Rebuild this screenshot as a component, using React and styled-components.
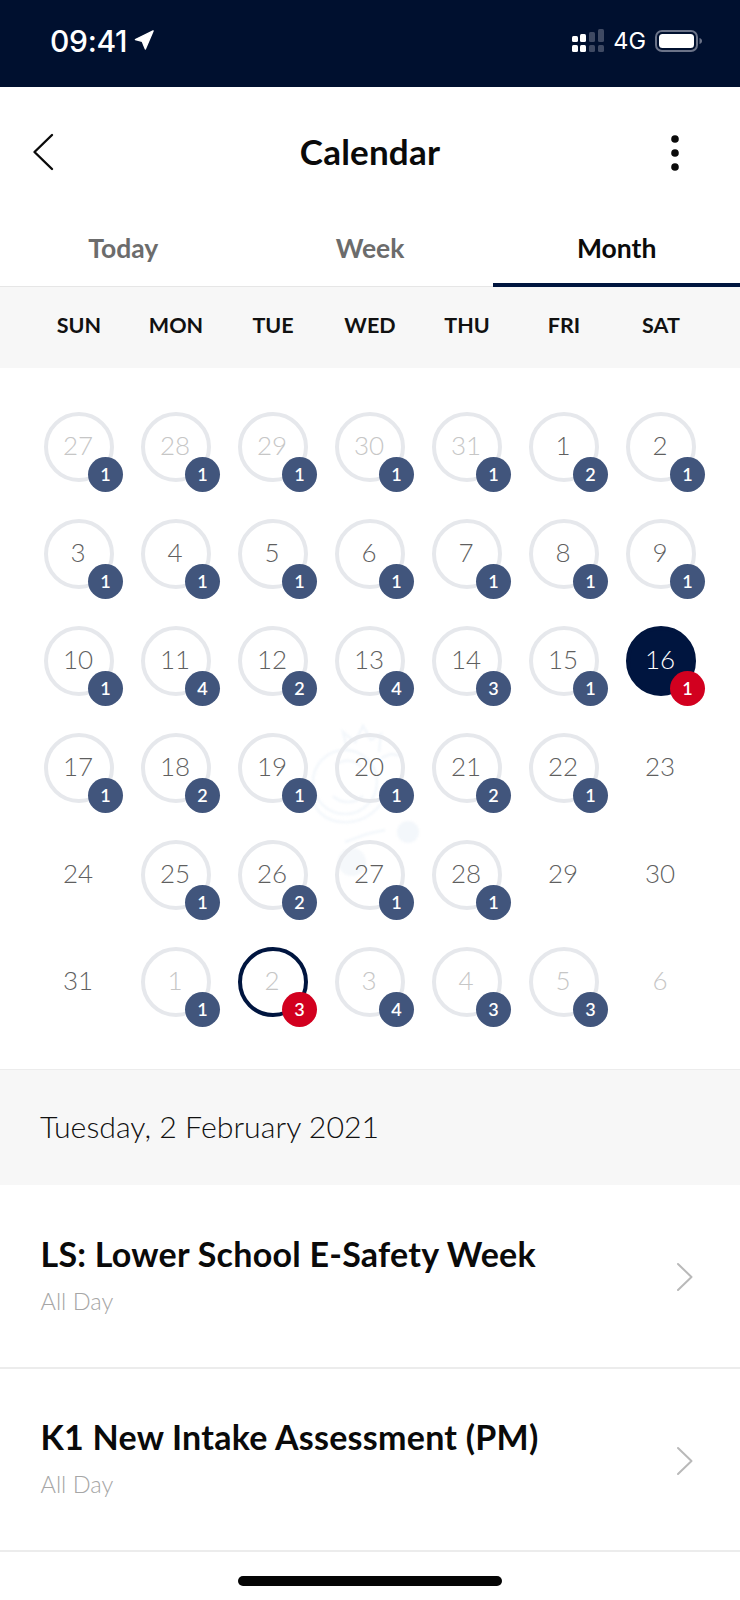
import React from "react";
import styled, { createGlobalStyle } from "styled-components";

const Global = createGlobalStyle`
  html, body { margin: 0; padding: 0; background: #fff; }
  body { font-family: Lato, "Noto Sans", sans-serif; }
`;

const Page = styled.div`
  position: relative;
  width: 740px;
  height: 1600px;
  overflow: hidden;
  background: #fff;
`;

const StatusBar = styled.div`
  height: 87px;
  background: #00102f;
  color: #fff;
  display: flex;
  justify-content: space-between;
  padding: 26px 37px 0 50px;
  box-sizing: border-box;
  font-family: Inter, sans-serif;
`;
const StatusGroup = styled.div`
  display: flex;
  align-items: flex-start;
  height: 30px;
`;
const Time = styled.span`
  font-size: 30px;
  font-weight: 500;
  line-height: 30px;
  letter-spacing: -0.3px;
`;
const Net = styled.span`
  font-size: 23.5px;
  line-height: 30px;
  margin: 0 9px 0 9px;
`;

const Header = styled.div`
  height: 130px;
  display: grid;
  grid-template-columns: 1fr auto 1fr;
  align-items: center;
  padding: 0 32px;
  box-sizing: border-box;
`;
const HeaderEnd = styled.div`
  display: flex;
  justify-content: flex-end;
  padding: 2px 28px 0 0;
`;
const Title = styled.h1`
  margin: 0 0 2px;
  font-size: 35px;
  font-weight: 700;
  letter-spacing: 0.2px;
  color: #0a0a0a;
`;

const Tabs = styled.div`
  height: 70px;
  display: grid;
  grid-template-columns: repeat(3, 1fr);
  border-bottom: 1px solid #e6e6e6;
  box-sizing: border-box;
`;
const Tab = styled.div`
  display: flex;
  align-items: center;
  justify-content: center;
  padding-bottom: 4px;
  font-size: 26.5px;
  font-weight: 700;
  color: ${(p) => (p.$active ? "#0b0b0b" : "#6c6c6c")};
  border-bottom: 4px solid ${(p) => (p.$active ? "#00153f" : "transparent")};
  margin-bottom: -1px;
  box-sizing: border-box;
`;

const WeekHeader = styled.div`
  height: 81px;
  background: #f7f7f7;
  display: grid;
  grid-template-columns: repeat(7, 97px);
  padding: 0 30.5px 6px;
  box-sizing: border-box;
`;
const WeekDay = styled.div`
  display: flex;
  align-items: center;
  justify-content: center;
  font-size: 21.5px;
  font-weight: 700;
  color: #111;
`;

const Month = styled.div`
  position: relative;
  display: grid;
  grid-template-columns: repeat(7, 97px);
  grid-auto-rows: 107px;
  padding: 25px 30.5px 34px;
`;
const Watermark = styled.svg`
  position: absolute;
  left: 305px;
  top: 352px;
  width: 125px;
  height: 180px;
  filter: blur(1px);
`;
const Cell = styled.div`
  display: flex;
  align-items: center;
  justify-content: center;
  position: relative;
`;
const Day = styled.div`
  position: relative;
  width: 70px;
  height: 70px;
  box-sizing: border-box;
  border-radius: 50%;
  display: flex;
  align-items: center;
  justify-content: center;
  padding: 0 2px 4px 0;
  font-size: 26px;
  font-weight: 300;
  color: ${(p) => (p.$today ? "#fff" : p.$muted ? "#c6c6c6" : "#5f5f5f")};
  background: ${(p) => (p.$today ? "#00153f" : "transparent")};
  border: 4px solid ${(p) =>
    p.$today ? "#00153f" : p.$selected ? "#00153f" : p.$ring ? "#e6e8ec" : "transparent"};
`;
const Badge = styled.span`
  position: absolute;
  right: -13px;
  bottom: -14px;
  width: 35px;
  height: 35px;
  border-radius: 50%;
  display: flex;
  align-items: center;
  justify-content: center;
  font-size: 18px;
  font-weight: 600;
  color: #fff;
  background: ${(p) => (p.$red ? "#d2001f" : "#41557c")};
`;

const DateBar = styled.div`
  height: 116px;
  background: #f7f7f7;
  border-top: 1px solid #ececec;
  box-sizing: border-box;
  display: flex;
  align-items: center;
  padding: 0 0 3px 40px;
  font-size: 30.3px;
  font-weight: 300;
  color: #111;
`;

const EventRow = styled.div`
  height: 183.5px;
  border-bottom: 2px solid #ececec;
  box-sizing: border-box;
  display: flex;
  align-items: center;
  justify-content: space-between;
  padding: 0 46px 0 40.5px;
`;
const EventText = styled.div`
  display: flex;
  flex-direction: column;
  gap: 13px;
  margin-top: -3px;
`;
const EventTitle = styled.div`
  font-size: 34px;
  font-weight: 700;
  line-height: 40px;
  letter-spacing: 0.25px;
  color: #0a0a0a;
`;
const EventSub = styled.div`
  font-size: 23.6px;
  font-weight: 300;
  line-height: 28px;
  color: #a6a6a6;
`;

const HomeBar = styled.div`
  position: absolute;
  left: 238px;
  top: 1576px;
  width: 264px;
  height: 10px;
  border-radius: 5px;
  background: #050505;
`;

const Signal = () => (
  <svg width="32" height="24" viewBox="0 0 32 24" style={{ marginTop: 3 }}>
    <rect x="0" y="7" width="6" height="6" rx="1.5" fill="#fff" />
    <rect x="8" y="5" width="6" height="8" rx="1.5" fill="#fff" />
    <rect x="17" y="3" width="6" height="10" rx="1.5" fill="#3f4a63" />
    <rect x="26" y="0" width="6" height="13" rx="1.5" fill="#3f4a63" />
    <rect x="0" y="16" width="6" height="7" rx="1.5" fill="#fff" />
    <rect x="8" y="16" width="6" height="7" rx="1.5" fill="#fff" />
    <rect x="17" y="16" width="6" height="7" rx="1.5" fill="#3f4a63" />
    <rect x="26" y="16" width="6" height="7" rx="1.5" fill="#3f4a63" />
  </svg>
);
const Battery = () => (
  <svg width="48" height="22" viewBox="0 0 48 22" style={{ marginTop: 4 }}>
    <rect x="1" y="1" width="41" height="20" rx="6" fill="none" stroke="#6b7388" strokeWidth="2" />
    <rect x="4" y="4" width="35" height="14" rx="3.5" fill="#fff" />
    <path d="M44.5 8c1.8.6 2.5 1.6 2.5 3s-.7 2.4-2.5 3z" fill="#6b7388" />
  </svg>
);
const LocationArrow = () => (
  <svg width="20" height="20" viewBox="0 0 22 22" style={{ marginLeft: 7, marginTop: 4 }}>
    <path d="M21 1 1.5 10.5l7.5 2L12.5 21z" fill="#fff" stroke="#fff" strokeWidth="1.5" strokeLinejoin="round" />
  </svg>
);
const Back = () => (
  <svg width="22" height="38" viewBox="0 0 22 38" fill="none">
    <path d="M20 2 2.5 19 20 36" stroke="#0a0a0a" strokeWidth="2.4" strokeLinecap="round" strokeLinejoin="round" />
  </svg>
);
const More = () => (
  <svg width="10" height="38" viewBox="0 0 10 38">
    <circle cx="5" cy="5" r="3.8" fill="#0a0a0a" />
    <circle cx="5" cy="19" r="3.8" fill="#0a0a0a" />
    <circle cx="5" cy="33" r="3.8" fill="#0a0a0a" />
  </svg>
);
const Chevron = () => (
  <svg width="18" height="30" viewBox="0 0 18 30" fill="none" style={{ marginTop: 3 }}>
    <path d="M2 2 15.5 15 2 28" stroke="#b9b9b9" strokeWidth="2" strokeLinecap="round" strokeLinejoin="round" />
  </svg>
);

const WEEK = ["SUN", "MON", "TUE", "WED", "THU", "FRI", "SAT"];
// [label, badge, flags]
const DAYS = [
  ["27", 1, "m"], ["28", 1, "m"], ["29", 1, "m"], ["30", 1, "m"], ["31", 1, "m"], ["1", 2], ["2", 1],
  ["3", 1], ["4", 1], ["5", 1], ["6", 1], ["7", 1], ["8", 1], ["9", 1],
  ["10", 1], ["11", 4], ["12", 2], ["13", 4], ["14", 3], ["15", 1], ["16", 1, "t"],
  ["17", 1], ["18", 2], ["19", 1], ["20", 1], ["21", 2], ["22", 1], ["23", 0],
  ["24", 0], ["25", 1], ["26", 2], ["27", 1], ["28", 1], ["29", 0], ["30", 0],
  ["31", 0], ["1", 1, "m"], ["2", 3, "s"], ["3", 4, "m"], ["4", 3, "m"], ["5", 3, "m"], ["6", 0, "m"],
];

export default function App() {
  return (
    <Page>
      <Global />
      <StatusBar>
        <StatusGroup>
          <Time>09:41</Time>
          <LocationArrow />
        </StatusGroup>
        <StatusGroup>
          <Signal />
          <Net>4G</Net>
          <Battery />
        </StatusGroup>
      </StatusBar>
      <Header>
        <Back />
        <Title>Calendar</Title>
        <HeaderEnd>
          <More />
        </HeaderEnd>
      </Header>
      <Tabs>
        <Tab>Today</Tab>
        <Tab>Week</Tab>
        <Tab $active>Month</Tab>
      </Tabs>
      <WeekHeader>
        {WEEK.map((d) => (
          <WeekDay key={d}>{d}</WeekDay>
        ))}
      </WeekHeader>
      <Month>
        <Watermark viewBox="0 0 125 180" fill="none" stroke="#f3f7fb" strokeWidth="2.5">
          <circle cx="40" cy="62" r="32" />
          <path d="M42 28 38 12l12 10 8-16 8 14 10-6-2 18" />
          <path d="M8 66c-4 24 14 38 36 36 14-1 24-8 32-18" />
          <path d="M30 45c8-6 20-6 26 2M28 76c8 8 22 8 30 0" />
          <path d="M76 38l10-4 12 2" />
          <circle cx="103" cy="112" r="11" fill="#f3f7fb" stroke="none" />
          <circle cx="47" cy="142" r="14" fill="#f5f8fb" stroke="none" />
          <path d="M40 122l22-8 18-4" />
        </Watermark>
        {DAYS.map(([label, count, flag], i) => (
          <Cell key={i}>
            <Day
              $muted={flag === "m" || flag === "s"}
              $today={flag === "t"}
              $selected={flag === "s"}
              $ring={count > 0}
            >
              {label}
              {count > 0 && <Badge $red={flag === "t" || flag === "s"}>{count}</Badge>}
            </Day>
          </Cell>
        ))}
      </Month>
      <DateBar>Tuesday, 2 February 2021</DateBar>
      <EventRow>
        <EventText>
          <EventTitle>LS: Lower School E-Safety Week</EventTitle>
          <EventSub>All Day</EventSub>
        </EventText>
        <Chevron />
      </EventRow>
      <EventRow>
        <EventText>
          <EventTitle>K1 New Intake Assessment (PM)</EventTitle>
          <EventSub>All Day</EventSub>
        </EventText>
        <Chevron />
      </EventRow>
      <HomeBar />
    </Page>
  );
}
